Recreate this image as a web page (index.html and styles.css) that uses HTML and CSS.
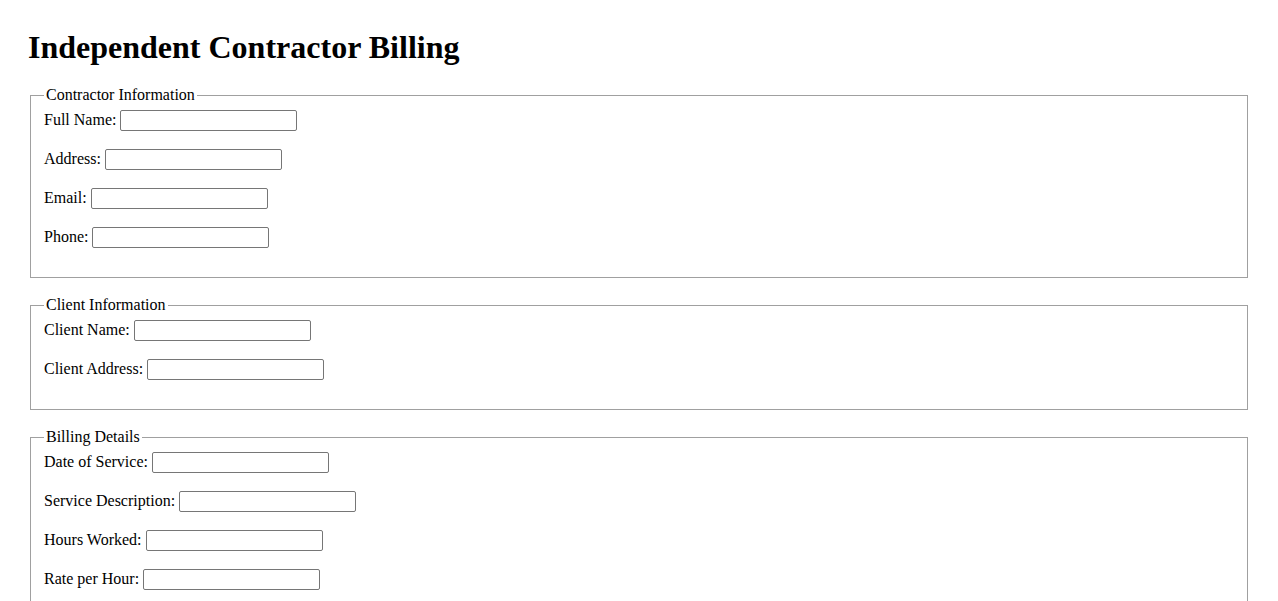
FILE: index.html
```html
<!DOCTYPE html>
<html lang="en">
<head>
    <meta charset="UTF-8">
    <meta name="viewport" content="width=device-width, initial-scale=1.0">
    <title>Independent Contractor Billing</title>
    <link rel="stylesheet" href="styles.css">
</head>
<body>
    <div class="container">
        <h1>Independent Contractor Billing</h1>

        <form id="billingForm">
            <fieldset>
                <legend>Contractor Information</legend>
                <div class="form-group">
                    <label for="fullName">Full Name:</label>
                    <input type="text" id="fullName" name="fullName">
                </div>
                <div class="form-group">
                    <label for="address">Address:</label>
                    <input type="text" id="address" name="address">
                </div>
                <div class="form-group">
                    <label for="email">Email:</label>
                    <input type="text" id="email" name="email">
                </div>
                <div class="form-group">
                    <label for="phone">Phone:</label>
                    <input type="text" id="phone" name="phone">
                </div>
            </fieldset>

            <fieldset>
                <legend>Client Information</legend>
                <div class="form-group">
                    <label for="clientName">Client Name:</label>
                    <input type="text" id="clientName" name="clientName">
                </div>
                <div class="form-group">
                    <label for="clientAddress">Client Address:</label>
                    <input type="text" id="clientAddress" name="clientAddress">
                </div>
            </fieldset>

            <fieldset>
                <legend>Billing Details</legend>
                <div class="form-group">
                    <label for="serviceDate">Date of Service:</label>
                    <input type="text" id="serviceDate" name="serviceDate">
                </div>
                <div class="form-group">
                    <label for="serviceDescription">Service Description:</label>
                    <input type="text" id="serviceDescription" name="serviceDescription">
                </div>
                <div class="form-group">
                    <label for="hoursWorked">Hours Worked:</label>
                    <input type="text" id="hoursWorked" name="hoursWorked">
                </div>
                <div class="form-group">
                    <label for="ratePerHour">Rate per Hour:</label>
                    <input type="text" id="ratePerHour" name="ratePerHour">
                </div>
                <div class="form-group">
                    <label for="totalAmount">Total Amount:</label>
                    <input type="text" id="totalAmount" name="totalAmount" readonly>
                </div>
            </fieldset>

            <button type="submit" class="submit-btn">Generate Invoice</button>
        </form>
    </div>
</body>
</html>
```

FILE: styles.css
```css
body {
    font-family: "Liberation Serif", "Times New Roman", serif;
    font-size: 16px;
    color: #000;
    background: #fff;
    margin: 8px;
}

.container {
    padding: 20px;
}

h1 {
    font-size: 32px;
    font-weight: bold;
    margin: 1px 0 20px;
}

/* Sections */
fieldset {
    margin: 0 2px 18px;
    padding: 6px 13px 11px;
    border: 1px solid #a0a0a0;
}

legend {
    padding: 0 2px;
}

.form-group {
    margin-bottom: 18px;
}

input[type="text"] {
    font-family: "Liberation Sans", Arial, sans-serif;
    font-size: 13.33px;
    width: 177px;
    height: 21px;
    box-sizing: border-box;
    padding: 1px 2px;
    border: 1px solid #767676;
    border-radius: 2px;
}

.submit-btn {
    font-family: "Liberation Sans", Arial, sans-serif;
    font-size: 13.33px;
}
```
